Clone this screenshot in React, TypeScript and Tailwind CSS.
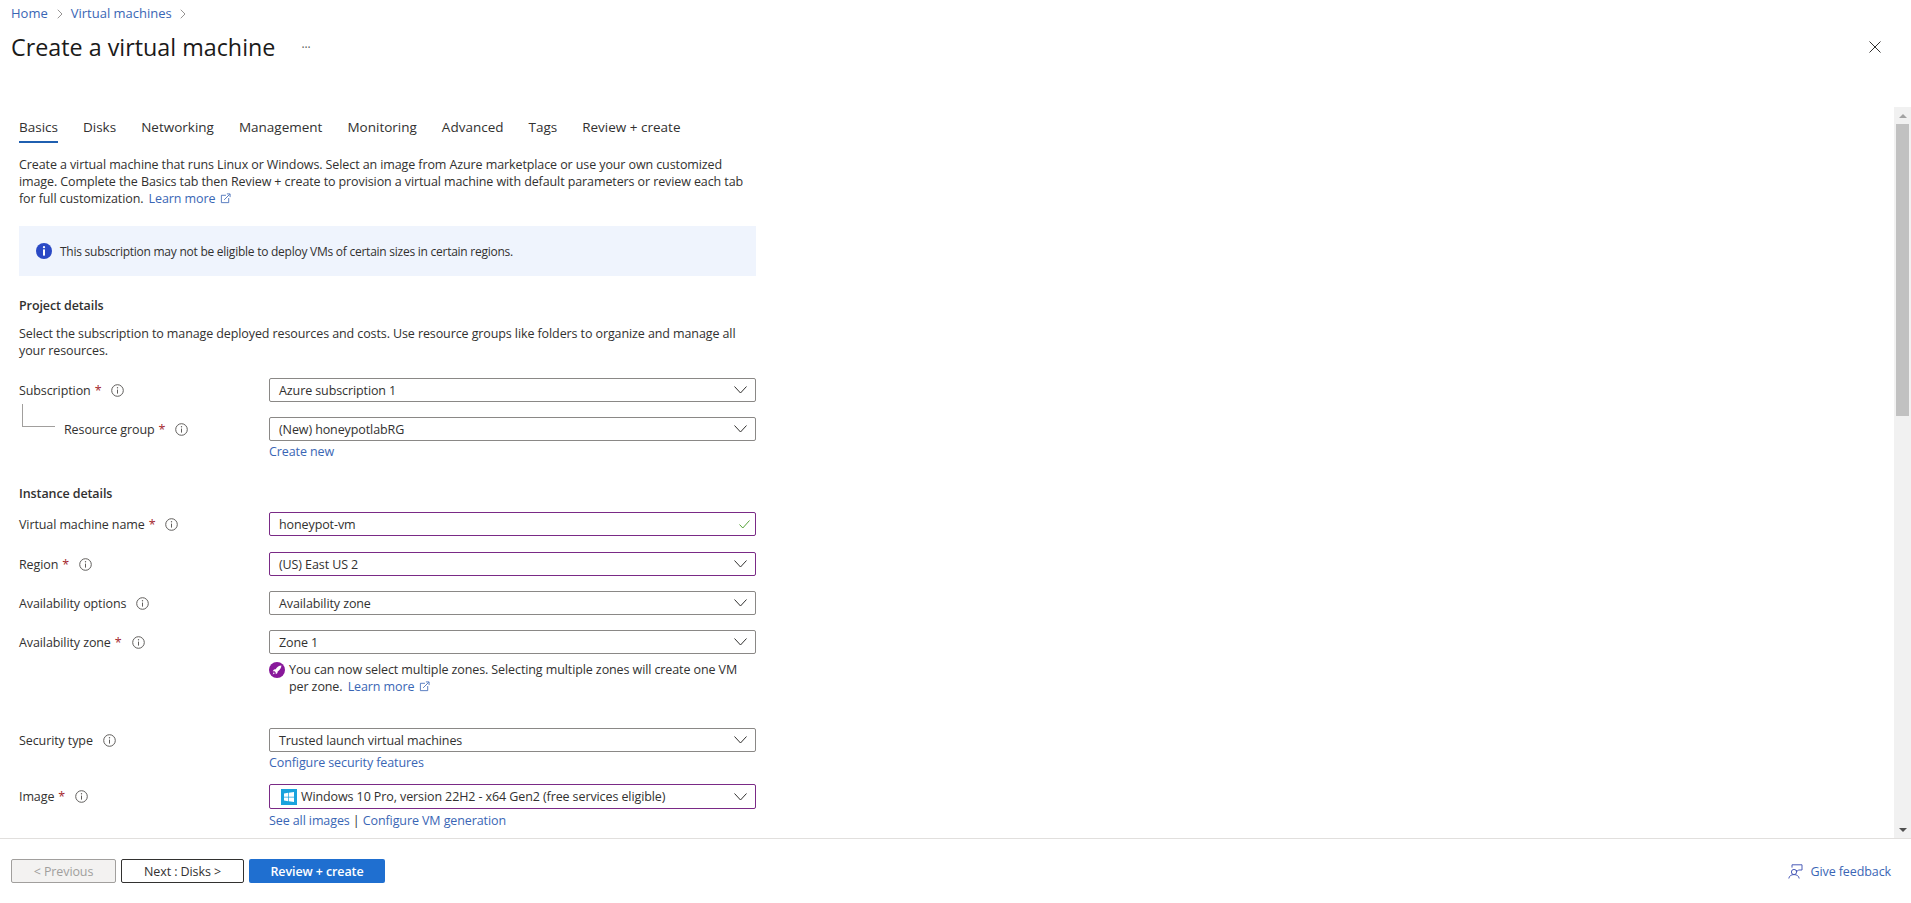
import type { ReactNode } from "react";
import { ChevronRight } from "lucide-react";

const tabs = ["Basics", "Disks", "Networking", "Management", "Monitoring", "Advanced", "Tags", "Review + create"];

function InfoIcon() {
  return (
    <svg width="13" height="13" viewBox="0 0 13 13" className="ml-[10px] shrink-0">
      <circle cx="6.5" cy="6.5" r="5.8" fill="none" stroke="#605e5c" strokeWidth="1" />
      <path d="M6.5 5.6V9.6" stroke="#605e5c" strokeWidth="1" />
      <circle cx="6.5" cy="3.8" r="0.7" fill="#605e5c" />
    </svg>
  );
}

function ExternalIcon() {
  return (
    <svg width="11" height="11" viewBox="0 0 12 12" className="inline-block ml-[5px] align-[-1px]" fill="none" stroke="#3a66b5" strokeWidth="0.9">
      <path d="M6.5 2.5H1.5V10.5H9.5V5.5" />
      <path d="M4.5 7.5L10.5 1.5M7.5 1H11V4.5" />
    </svg>
  );
}

function Chevron() {
  return (
    <svg width="13" height="8" viewBox="0 0 13 8" fill="none" stroke="#323130" strokeWidth="1" className="shrink-0">
      <path d="M0.5 0.5L6.5 7L12.5 0.5" />
    </svg>
  );
}

function Label({ text, required }: { text: string; required?: boolean }) {
  return (
    <div className="flex items-center h-6">
      <span>{text}</span>
      {required && <span className="ml-1 text-[#a4262c]">*</span>}
      <InfoIcon />
    </div>
  );
}

function Select({ value, purple, icon }: { value: string; purple?: boolean; icon?: ReactNode }) {
  return (
    <div
      className={`flex items-center w-[487px] pl-[9px] pr-2 rounded-[2px] border ${purple ? "border-[#7a2a86]" : "border-[#8a8886]"} ${icon ? "h-[25px]" : "h-6"}`}
    >
      {icon}
      <span className="flex-1">{value}</span>
      <Chevron />
    </div>
  );
}

function WindowsIcon() {
  return (
    <svg width="16" height="16" viewBox="0 0 16 16" className="mr-1 ml-[2px] shrink-0">
      <rect width="16" height="16" fill="#1aa3dd" />
      <path d="M3 4.4L7.2 3.8V7.7H3ZM7.9 3.7L13 3V7.7H7.9ZM3 8.4H7.2V12.2L3 11.6ZM7.9 8.4H13V13L7.9 12.3Z" fill="#fff" />
    </svg>
  );
}

function RocketBadge() {
  return (
    <svg width="16" height="16" viewBox="0 0 16 16" className="mr-[4px] mt-[1px] shrink-0">
      <circle cx="8" cy="8" r="8" fill="#88189a" />
      <path d="M12.4 3.6C10 3.7 8 5 6.6 7.3L5 7.6 3.7 9.2 5.6 9.3 6.7 10.4 6.8 12.3 8.4 11 8.7 9.4C11 8 12.3 6 12.4 3.6Z" fill="#fff" />
      <path d="M4.8 10.2L3.6 12.4 5.8 11.2Z" fill="#fff" />
    </svg>
  );
}

function FeedbackIcon() {
  return (
    <svg width="15" height="15" viewBox="0 0 15 15" fill="none" stroke="#4a5cb8" strokeWidth="1" className="mr-[8px]">
      <circle cx="6" cy="8" r="2.6" />
      <path d="M0.8 14.5C1.2 12 3 10.6 6 10.6S10.8 12 11.2 14.5" />
      <path d="M4 3.6V0.8H14V6H10.4L8.6 7.8V6" />
    </svg>
  );
}

export default function App() {
  return (
    <div
      className="h-[903px] w-[1911px] overflow-hidden bg-white flex flex-col text-[#323130] text-[12.5px] tracking-[-0.1px] leading-[17px]"
      style={{ fontFamily: '"Open Sans", "Noto Sans", sans-serif' }}
    >
      {/* header */}
      <header className="h-[107px] shrink-0 pl-[11px] pr-[30px]">
        <div className="flex items-center h-[17px] mt-[5px] text-[13px] tracking-normal text-[#3a66b5]">
          <span>Home</span>
          <ChevronRight size={16} strokeWidth={1} className="ml-[4px] mr-[3px] text-[#605e5c]" />
          <span>Virtual machines</span>
          <ChevronRight size={16} strokeWidth={1} className="mx-[3px] text-[#605e5c]" />
        </div>
        <div className="flex items-center mt-[11px] h-[28px]">
          <h1 className="text-[23.3px] leading-[28px] tracking-normal font-medium text-[#1b1a19]">Create a virtual machine</h1>
          <span className="ml-[26px] text-[#605e5c] text-[12px]">···</span>
          <svg width="12" height="12" viewBox="0 0 12 12" fill="none" stroke="#323130" strokeWidth="1" className="ml-auto">
            <path d="M0.5 0.5L11.5 11.5M11.5 0.5L0.5 11.5" />
          </svg>
        </div>
      </header>

      <div className="flex-1 min-h-0 flex">
        <main className="flex-1 min-w-0 overflow-hidden pl-[19px]">
          <div className="flex h-9 w-[737px] text-[13.5px] tracking-normal">
            {tabs.map((t, i) => (
              <div
                key={t}
                className={`pt-[12px] mr-[25px] h-9 border-b-2 ${i === 0 ? "border-[#1f5fb0] font-medium" : "border-transparent"}`}
              >
                {t}
              </div>
            ))}
          </div>

          <p className="w-[737px] mt-[13px]">
            Create a virtual machine that runs Linux or Windows. Select an image from Azure marketplace or use your own customized image. Complete the Basics tab then Review + create to provision a virtual machine with default parameters or review each tab for full customization.{" "}
            <a className="ml-[2px] text-[#3a66b5]">
              Learn more
              <ExternalIcon />
            </a>
          </p>

          <div className="w-[737px] h-[50px] mt-[19px] bg-[#eff4fd] flex items-center pl-[17px]">
            <svg width="16" height="16" viewBox="0 0 16 16" className="mr-[8px]">
              <circle cx="8" cy="8" r="8" fill="#2a49c5" />
              <circle cx="8" cy="4.2" r="1.1" fill="#fff" />
              <rect x="7" y="6.4" width="2" height="6.2" fill="#fff" />
            </svg>
            <span className="text-[12px] tracking-[-0.25px]">This subscription may not be eligible to deploy VMs of certain sizes in certain regions.</span>
          </div>

          <h2 className="mt-[21px] font-semibold">Project details</h2>
          <p className="w-[737px] mt-[11px]">
            Select the subscription to manage deployed resources and costs. Use resource groups like folders to organize and manage all your resources.
          </p>

          <div className="flex mt-[19px]">
            <div className="w-[250px]"><Label text="Subscription" required /></div>
            <Select value="Azure subscription 1" />
          </div>

          <div className="flex mt-[15px]">
            <div className="w-[250px] flex">
              <div className="w-[33px] h-[23px] -mt-[13px] ml-[3px] mr-[9px] border-l border-b border-[#a19f9d]" />
              <Label text="Resource group" required />
            </div>
            <div>
              <Select value="(New) honeypotlabRG" />
              <a className="block mt-[2px] text-[#3a66b5]">Create new</a>
            </div>
          </div>

          <h2 className="mt-[25px] font-semibold">Instance details</h2>

          <div className="flex mt-[10px]">
            <div className="w-[250px]"><Label text="Virtual machine name" required /></div>
            <div className="flex items-center w-[487px] h-6 pl-[9px] pr-[5px] rounded-[2px] border border-[#7a2a86]">
              <span className="flex-1">honeypot-vm</span>
              <svg width="11" height="9" viewBox="0 0 11 9" fill="none" stroke="#57a33a" strokeWidth="1">
                <path d="M0.5 4.5L3.8 8L10.5 0.5" />
              </svg>
            </div>
          </div>

          <div className="flex mt-[16px]">
            <div className="w-[250px]"><Label text="Region" required /></div>
            <Select value="(US) East US 2" purple />
          </div>

          <div className="flex mt-[15px]">
            <div className="w-[250px]"><Label text="Availability options" /></div>
            <Select value="Availability zone" />
          </div>

          <div className="flex mt-[15px]">
            <div className="w-[250px]"><Label text="Availability zone" required /></div>
            <div>
              <Select value="Zone 1" />
              <div className="flex mt-[7px] w-[487px]">
                <RocketBadge />
                <p>
                  You can now select multiple zones. Selecting multiple zones will create one VM per zone.{" "}
                  <a className="ml-[2px] text-[#3a66b5]">
                    Learn more
                    <ExternalIcon />
                  </a>
                </p>
              </div>
            </div>
          </div>

          <div className="flex mt-[33px]">
            <div className="w-[250px]"><Label text="Security type" /></div>
            <div>
              <Select value="Trusted launch virtual machines" />
              <a className="block mt-[2px] text-[#3a66b5]">Configure security features</a>
            </div>
          </div>

          <div className="flex mt-[13px]">
            <div className="w-[250px]"><Label text="Image" required /></div>
            <div>
              <Select value="Windows 10 Pro, version 22H2 - x64 Gen2 (free services eligible)" purple icon={<WindowsIcon />} />
              <div className="mt-[3px] text-[#3a66b5]">
                See all images <span className="text-[#323130]">|</span> Configure VM generation
              </div>
            </div>
          </div>
        </main>

        {/* scrollbar */}
        <div className="w-[17px] shrink-0 bg-[#f1f1f1] flex flex-col items-center">
          <div className="h-[17px] flex items-center justify-center">
            <div className="w-0 h-0 border-x-[4px] border-x-transparent border-b-[4px] border-b-[#a3a3a3]" />
          </div>
          <div className="w-[13px] h-[292px] bg-[#c1c1c1]" />
          <div className="flex-1" />
          <div className="h-[17px] flex items-center justify-center">
            <div className="w-0 h-0 border-x-[4px] border-x-transparent border-t-[4px] border-t-[#505050]" />
          </div>
        </div>
      </div>

      {/* footer */}
      <footer className="h-[65px] shrink-0 border-t border-[#e1dfdd] flex items-start pt-[20px] pl-[11px] pr-[20px]">
        <button className="w-[105px] h-6 rounded-[2px] border border-[#a19f9d] bg-[#f3f2f1] text-[#a19f9d]">&lt; Previous</button>
        <button className="w-[123px] h-6 ml-[5px] rounded-[2px] border border-[#323130]">Next : Disks &gt;</button>
        <button className="w-[136px] h-6 ml-[5px] rounded-[2px] bg-[#1f6fd0] text-white font-semibold">Review + create</button>
        <div className="ml-auto flex items-center h-6 text-[#3a66b5]">
          <FeedbackIcon />
          Give feedback
        </div>
      </footer>
    </div>
  );
}
